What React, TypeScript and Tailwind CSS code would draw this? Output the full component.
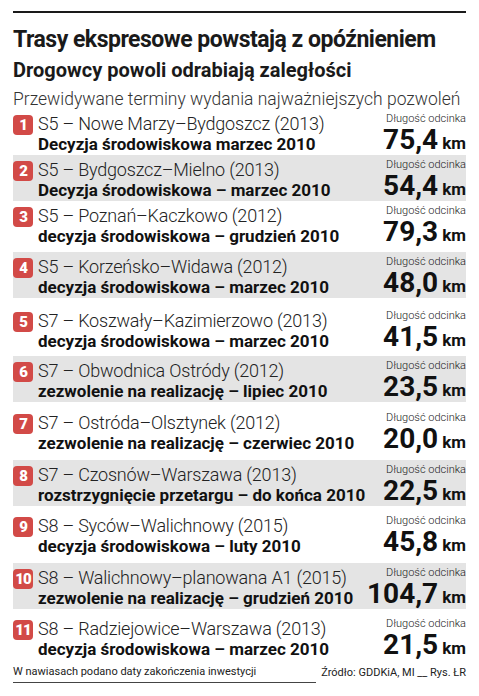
const rows = [
  { n: '1', route: 'S5 – Nowe Marzy–Bydgoszcz (2013)', decision: 'Decyzja środowiskowa marzec 2010', km: '75,4', gray: false, mt: 'mt-0' },
  { n: '2', route: 'S5 – Bydgoszcz–Mielno (2013)', decision: 'Decyzja środowiskowa – marzec 2010', km: '54,4', gray: true, mt: 'mt-0' },
  { n: '3', route: 'S5 – Poznań–Kaczkowo (2012)', decision: 'decyzja środowiskowa – grudzień 2010', km: '79,3', gray: false, mt: 'mt-0' },
  { n: '4', route: 'S5 – Korzeńsko–Widawa (2012)', decision: 'decyzja środowiskowa – marzec 2010', km: '48,0', gray: true, mt: 'mt-[5px]' },
  { n: '5', route: 'S7 – Koszwały–Kazimierzowo (2013)', decision: 'decyzja środowiskowa – marzec 2010', km: '41,5', gray: false, mt: 'mt-[8px]' },
  { n: '6', route: 'S7 – Obwodnica Ostródy (2012)', decision: 'zezwolenie na realizację – lipiec 2010', km: '23,5', gray: true, mt: 'mt-[4px]' },
  { n: '7', route: 'S7 – Ostróda–Olsztynek (2012)', decision: 'zezwolenie na realizację – czerwiec 2010', km: '20,0', gray: false, mt: 'mt-[6px]' },
  { n: '8', route: 'S7 – Czosnów–Warszawa (2013)', decision: 'rozstrzygnięcie przetargu – do końca 2010', km: '22,5', gray: true, mt: 'mt-[6px]' },
  { n: '9', route: 'S8 – Syców–Walichnowy (2015)', decision: 'decyzja środowiskowa – luty 2010', km: '45,8', gray: false, mt: 'mt-[5px]' },
  { n: '10', route: 'S8 – Walichnowy–planowana A1 (2015)', decision: 'zezwolenie na realizację – grudzień 2010', km: '104,7', gray: true, mt: 'mt-[6px]' },
  { n: '11', route: 'S8 – Radziejowice–Warszawa (2013)', decision: 'decyzja środowiskowa – marzec 2010', km: '21,5', gray: false, mt: 'mt-[5px]' },
];

const narrow = { fontFamily: '"Liberation Sans Narrow", Roboto, "Liberation Sans", sans-serif' };

export default function App() {
  return (
    <div className="w-[479px] h-[696px] bg-white text-[#1a1a1a] px-[13px] pt-[11px]" style={{ fontFamily: 'Roboto, "Liberation Sans", sans-serif' }}>
      <div className="h-[2px] bg-[#1a1a1a]" />
      <h1 className="mt-[13px] text-[23px] leading-[28px] font-bold tracking-[-0.5px] whitespace-nowrap" style={narrow}>
        Trasy ekspresowe powstają z opóźnieniem
      </h1>
      <h2 className="mt-[5px] text-[20px] leading-[22px] font-bold whitespace-nowrap" style={narrow}>
        Drogowcy powoli odrabiają zaległości
      </h2>
      <p className="mt-[7px] text-[17.5px] leading-[22px] font-light text-[#333] whitespace-nowrap">
        Przewidywane terminy wydania najważniejszych pozwoleń
      </p>
      <div className="mt-[-1px]">
        {rows.map((r) => (
          <div key={r.n} className={`${r.mt} h-[46px] flex items-start justify-between ${r.gray ? 'bg-[#e4e4e4]' : ''}`}>
            <div className="flex items-start gap-[5px] pt-[4px]">
              <div className="w-[20px] h-[20px] mt-[2px] rounded-[4px] bg-[#d24a47] text-white flex items-center justify-center text-[15px] font-black leading-none tracking-[-1px]">
                {r.n}
              </div>
              <div className="whitespace-nowrap">
                <div className="text-[18px] leading-[22px] font-light tracking-[-0.2px] text-[#222]">{r.route}</div>
                <div className="text-[17px] leading-[19px] font-bold text-[#111]" style={narrow}>{r.decision}</div>
              </div>
            </div>
            <div className="flex flex-col items-end pt-[3px]">
              <div className="text-[11px] leading-[13px] font-light text-[#222]">Długość odcinka</div>
              <div className="flex items-baseline gap-[4px] leading-[26px] mt-[2px]" style={narrow}>
                <span className="text-[28px] font-bold text-[#111]">{r.km}</span>
                <span className="text-[17px] font-bold text-[#111]">km</span>
              </div>
            </div>
          </div>
        ))}
      </div>
      <div className="mt-[5px] flex items-end gap-[5px] text-[11px] leading-[14px] text-[#222] whitespace-nowrap">
        <div className="flex-1 border-b border-[#444] pb-[3px]">W nawiasach podano daty zakończenia inwestycji</div>
        <div className="pb-[3px]">Źródło: GDDKiA, MI __ Rys. ŁR</div>
      </div>
    </div>
  );
}
